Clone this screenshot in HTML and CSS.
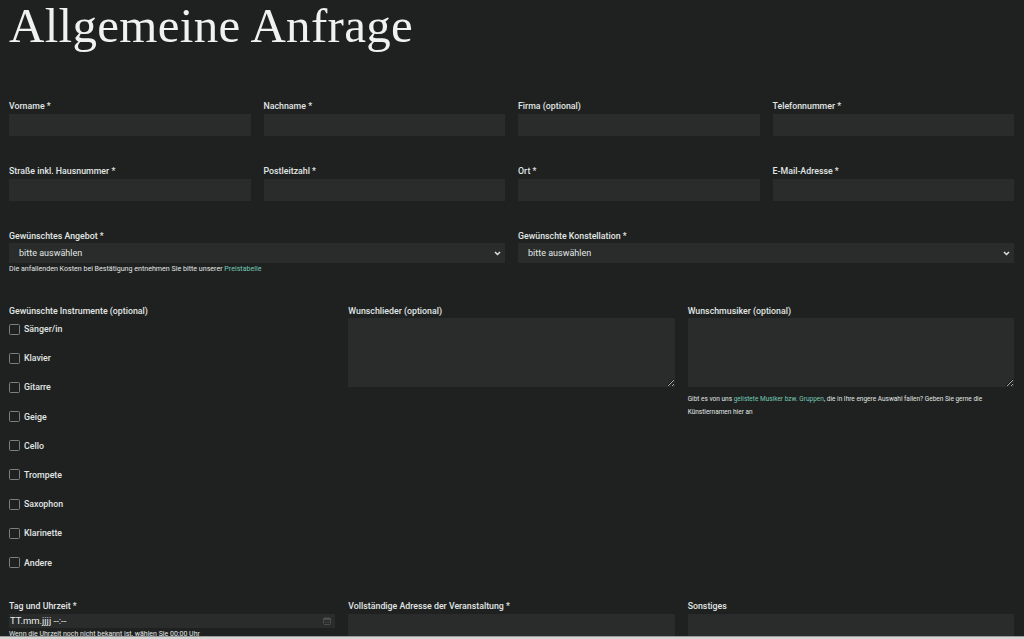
FILE: index.html
```html
<!DOCTYPE html>
<html lang="de">
<head>
<meta charset="utf-8">
<title>Allgemeine Anfrage</title>
<link rel="stylesheet" href="styles.css">
</head>
<body>
<main class="page">
  <h1 class="title">Allgemeine Anfrage</h1>
  <form class="form">
    <div class="row row-4">
      <div class="field"><label class="lbl">Vorname *</label><input class="inp" type="text"></div>
      <div class="field"><label class="lbl">Nachname *</label><input class="inp" type="text"></div>
      <div class="field"><label class="lbl">Firma (optional)</label><input class="inp" type="text"></div>
      <div class="field"><label class="lbl">Telefonnummer *</label><input class="inp" type="text"></div>
    </div>
    <div class="row row-4 row-gap">
      <div class="field"><label class="lbl">Straße inkl. Hausnummer *</label><input class="inp" type="text"></div>
      <div class="field"><label class="lbl">Postleitzahl *</label><input class="inp" type="text"></div>
      <div class="field"><label class="lbl">Ort *</label><input class="inp" type="text"></div>
      <div class="field"><label class="lbl">E-Mail-Adresse *</label><input class="inp" type="text"></div>
    </div>
    <div class="row row-2 row-gap3">
      <div class="field">
        <label class="lbl">Gewünschtes Angebot *</label>
        <div class="selwrap">
          <select class="sel"><option>bitte auswählen</option></select>
          <svg class="chev" width="7" height="5" viewBox="0 0 7 5"><path d="M1 1 L3.5 3.5 L6 1" fill="none" stroke="#dfe4e2" stroke-width="1.5"/></svg>
        </div>
        <p class="help help-1">Die anfallenden Kosten bei Bestätigung entnehmen Sie bitte unserer <a class="link" href="#">Preistabelle</a></p>
      </div>
      <div class="field">
        <label class="lbl">Gewünschte Konstellation *</label>
        <div class="selwrap">
          <select class="sel"><option>bitte auswählen</option></select>
          <svg class="chev" width="7" height="5" viewBox="0 0 7 5"><path d="M1 1 L3.5 3.5 L6 1" fill="none" stroke="#dfe4e2" stroke-width="1.5"/></svg>
        </div>
      </div>
    </div>
    <div class="row row-3 row-gap4">
      <div class="field">
        <label class="lbl">Gewünschte Instrumente (optional)</label>
        <ul class="checks">
          <li class="check"><span class="box"></span><span class="ctext">Sänger/in</span></li>
          <li class="check"><span class="box"></span><span class="ctext">Klavier</span></li>
          <li class="check"><span class="box"></span><span class="ctext">Gitarre</span></li>
          <li class="check"><span class="box"></span><span class="ctext">Geige</span></li>
          <li class="check"><span class="box"></span><span class="ctext">Cello</span></li>
          <li class="check"><span class="box"></span><span class="ctext">Trompete</span></li>
          <li class="check"><span class="box"></span><span class="ctext">Saxophon</span></li>
          <li class="check"><span class="box"></span><span class="ctext">Klarinette</span></li>
          <li class="check"><span class="box"></span><span class="ctext">Andere</span></li>
        </ul>
      </div>
      <div class="field">
        <label class="lbl">Wunschlieder (optional)</label>
        <textarea class="ta"></textarea>
      </div>
      <div class="field">
        <label class="lbl">Wunschmusiker (optional)</label>
        <textarea class="ta"></textarea>
        <p class="help help-2">Gibt es von uns <a class="link" href="#">gelistete Musiker bzw. Gruppen</a>, die in Ihre engere Auswahl fallen? Geben Sie gerne die Künstlernamen hier an</p>
      </div>
    </div>
    <div class="row row-3 row-gap5">
      <div class="field">
        <label class="lbl">Tag und Uhrzeit *</label>
        <div class="date"><span class="dtext">TT.mm.jjjj --:--</span>
          <svg class="cal" width="8" height="8" viewBox="0 0 8 8"><rect x="0.5" y="1" width="7" height="6.5" rx="1" fill="none" stroke="#4a4f4d" stroke-width="1"/><rect x="0.5" y="1" width="7" height="2" fill="#4a4f4d"/><rect x="2" y="4.5" width="1.5" height="1.2" fill="#4a4f4d"/><rect x="4.5" y="4.5" width="1.5" height="1.2" fill="#4a4f4d"/></svg>
        </div>
        <p class="help help-3">Wenn die Uhrzeit noch nicht bekannt ist, wählen Sie 00:00 Uhr</p>
      </div>
      <div class="field">
        <label class="lbl">Vollständige Adresse der Veranstaltung *</label>
        <textarea class="ta"></textarea>
      </div>
      <div class="field">
        <label class="lbl">Sonstiges</label>
        <textarea class="ta"></textarea>
      </div>
    </div>
  </form>
</main>
<div class="winbar"></div>
</body>
</html>
```
FILE: styles.css
```css
html, body {
  margin: 0;
  padding: 0;
  background: #1f2120;
  color: #e1e7e5;
  font-family: Roboto, "Liberation Sans", Arial, sans-serif;
  overflow: hidden;
  height: 639px;
}
.page {
  padding: 0 10px 0 9px;
}
.title {
  margin: 0;
  font-family: "Liberation Serif", "Times New Roman", serif;
  font-weight: 400;
  font-size: 49px;
  line-height: 52px;
  color: #eef2f0;
  letter-spacing: 0.3px;
}
.form {
  margin-top: 48px;
}
.row {
  display: grid;
  column-gap: 13px;
}
.row-4 { grid-template-columns: repeat(4, 1fr); }
.row-2 { grid-template-columns: repeat(2, 1fr); }
.row-3 { grid-template-columns: repeat(3, 1fr); }
.row-gap { margin-top: 29px; }
.row-gap3 { margin-top: 29px; }
.row-gap4 { margin-top: 31px; }
.row-gap5 { margin-top: 27px; }
.field {
  display: flex;
  flex-direction: column;
  min-width: 0;
}
.lbl {
  display: block;
  font-size: 8.8px;
  line-height: 12px;
  font-weight: 500;
  margin-bottom: 2px;
  color: #e1e7e5;
  white-space: nowrap;
}
.row-2 .lbl, .row-3 .lbl { margin-bottom: 1px; }
.row-gap5 .lbl { margin-bottom: 2px; }
.inp {
  box-sizing: border-box;
  height: 22px;
  border: 0;
  background: #292c2b;
  margin: 0;
  padding: 0 8px;
  color: #e1e7e5;
  outline: none;
}
.selwrap {
  position: relative;
  height: 20px;
}
.sel {
  -webkit-appearance: none;
  appearance: none;
  display: block;
  box-sizing: border-box;
  width: 100%;
  height: 20px;
  border: 0;
  background: #292c2b;
  color: #e3e8e6;
  font-family: Roboto, "Liberation Sans", Arial, sans-serif;
  font-size: 9px;
  padding: 0 0 0 10px;
  margin: 0;
  outline: none;
}
.chev {
  position: absolute;
  right: 4px;
  top: 8px;
}
.help {
  margin: 1px 0 0;
  font-size: 7px;
  line-height: 10px;
  color: #e1e7e5;
}
.help-1 {
  font-size: 7.1px;
  margin-top: 1px;
}
.help-2 {
  font-size: 6.5px;
  margin-top: 6px;
  line-height: 13px;
}
.help-3 {
  margin-top: 1px;
}
.link {
  color: #74cbb6;
  text-decoration: none;
}
.checks {
  list-style: none;
  margin: 1px 0 0;
  padding: 0;
  display: flex;
  flex-direction: column;
  gap: 9.2px;
}
.check {
  display: flex;
  align-items: center;
  height: 20px;
  gap: 4px;
}
.box {
  box-sizing: border-box;
  width: 11px;
  height: 11px;
  border: 1.5px solid #7b7f7d;
  border-radius: 1.5px;
}
.ctext {
  font-size: 8.8px;
  font-weight: 500;
  color: #e1e7e5;
}
.ta {
  box-sizing: border-box;
  height: 69px;
  border: 0;
  background: #292c2b;
  margin: 0;
  padding: 4px 8px;
  resize: vertical;
  color-scheme: dark;
  outline: none;
  display: block;
  width: 100%;
}
.date {
  box-sizing: border-box;
  height: 14px;
  background: #292c2b;
  display: flex;
  align-items: center;
  justify-content: space-between;
  padding: 0 4px 0 1px;
}
.dtext {
  font-size: 9.5px;
  color: #e8ecea;
}
.winbar {
  position: fixed;
  left: 0;
  right: 0;
  bottom: 0;
  height: 2px;
  background: #d6d6d6;
  border-top: 1px solid #9c9c9c;
}
```
